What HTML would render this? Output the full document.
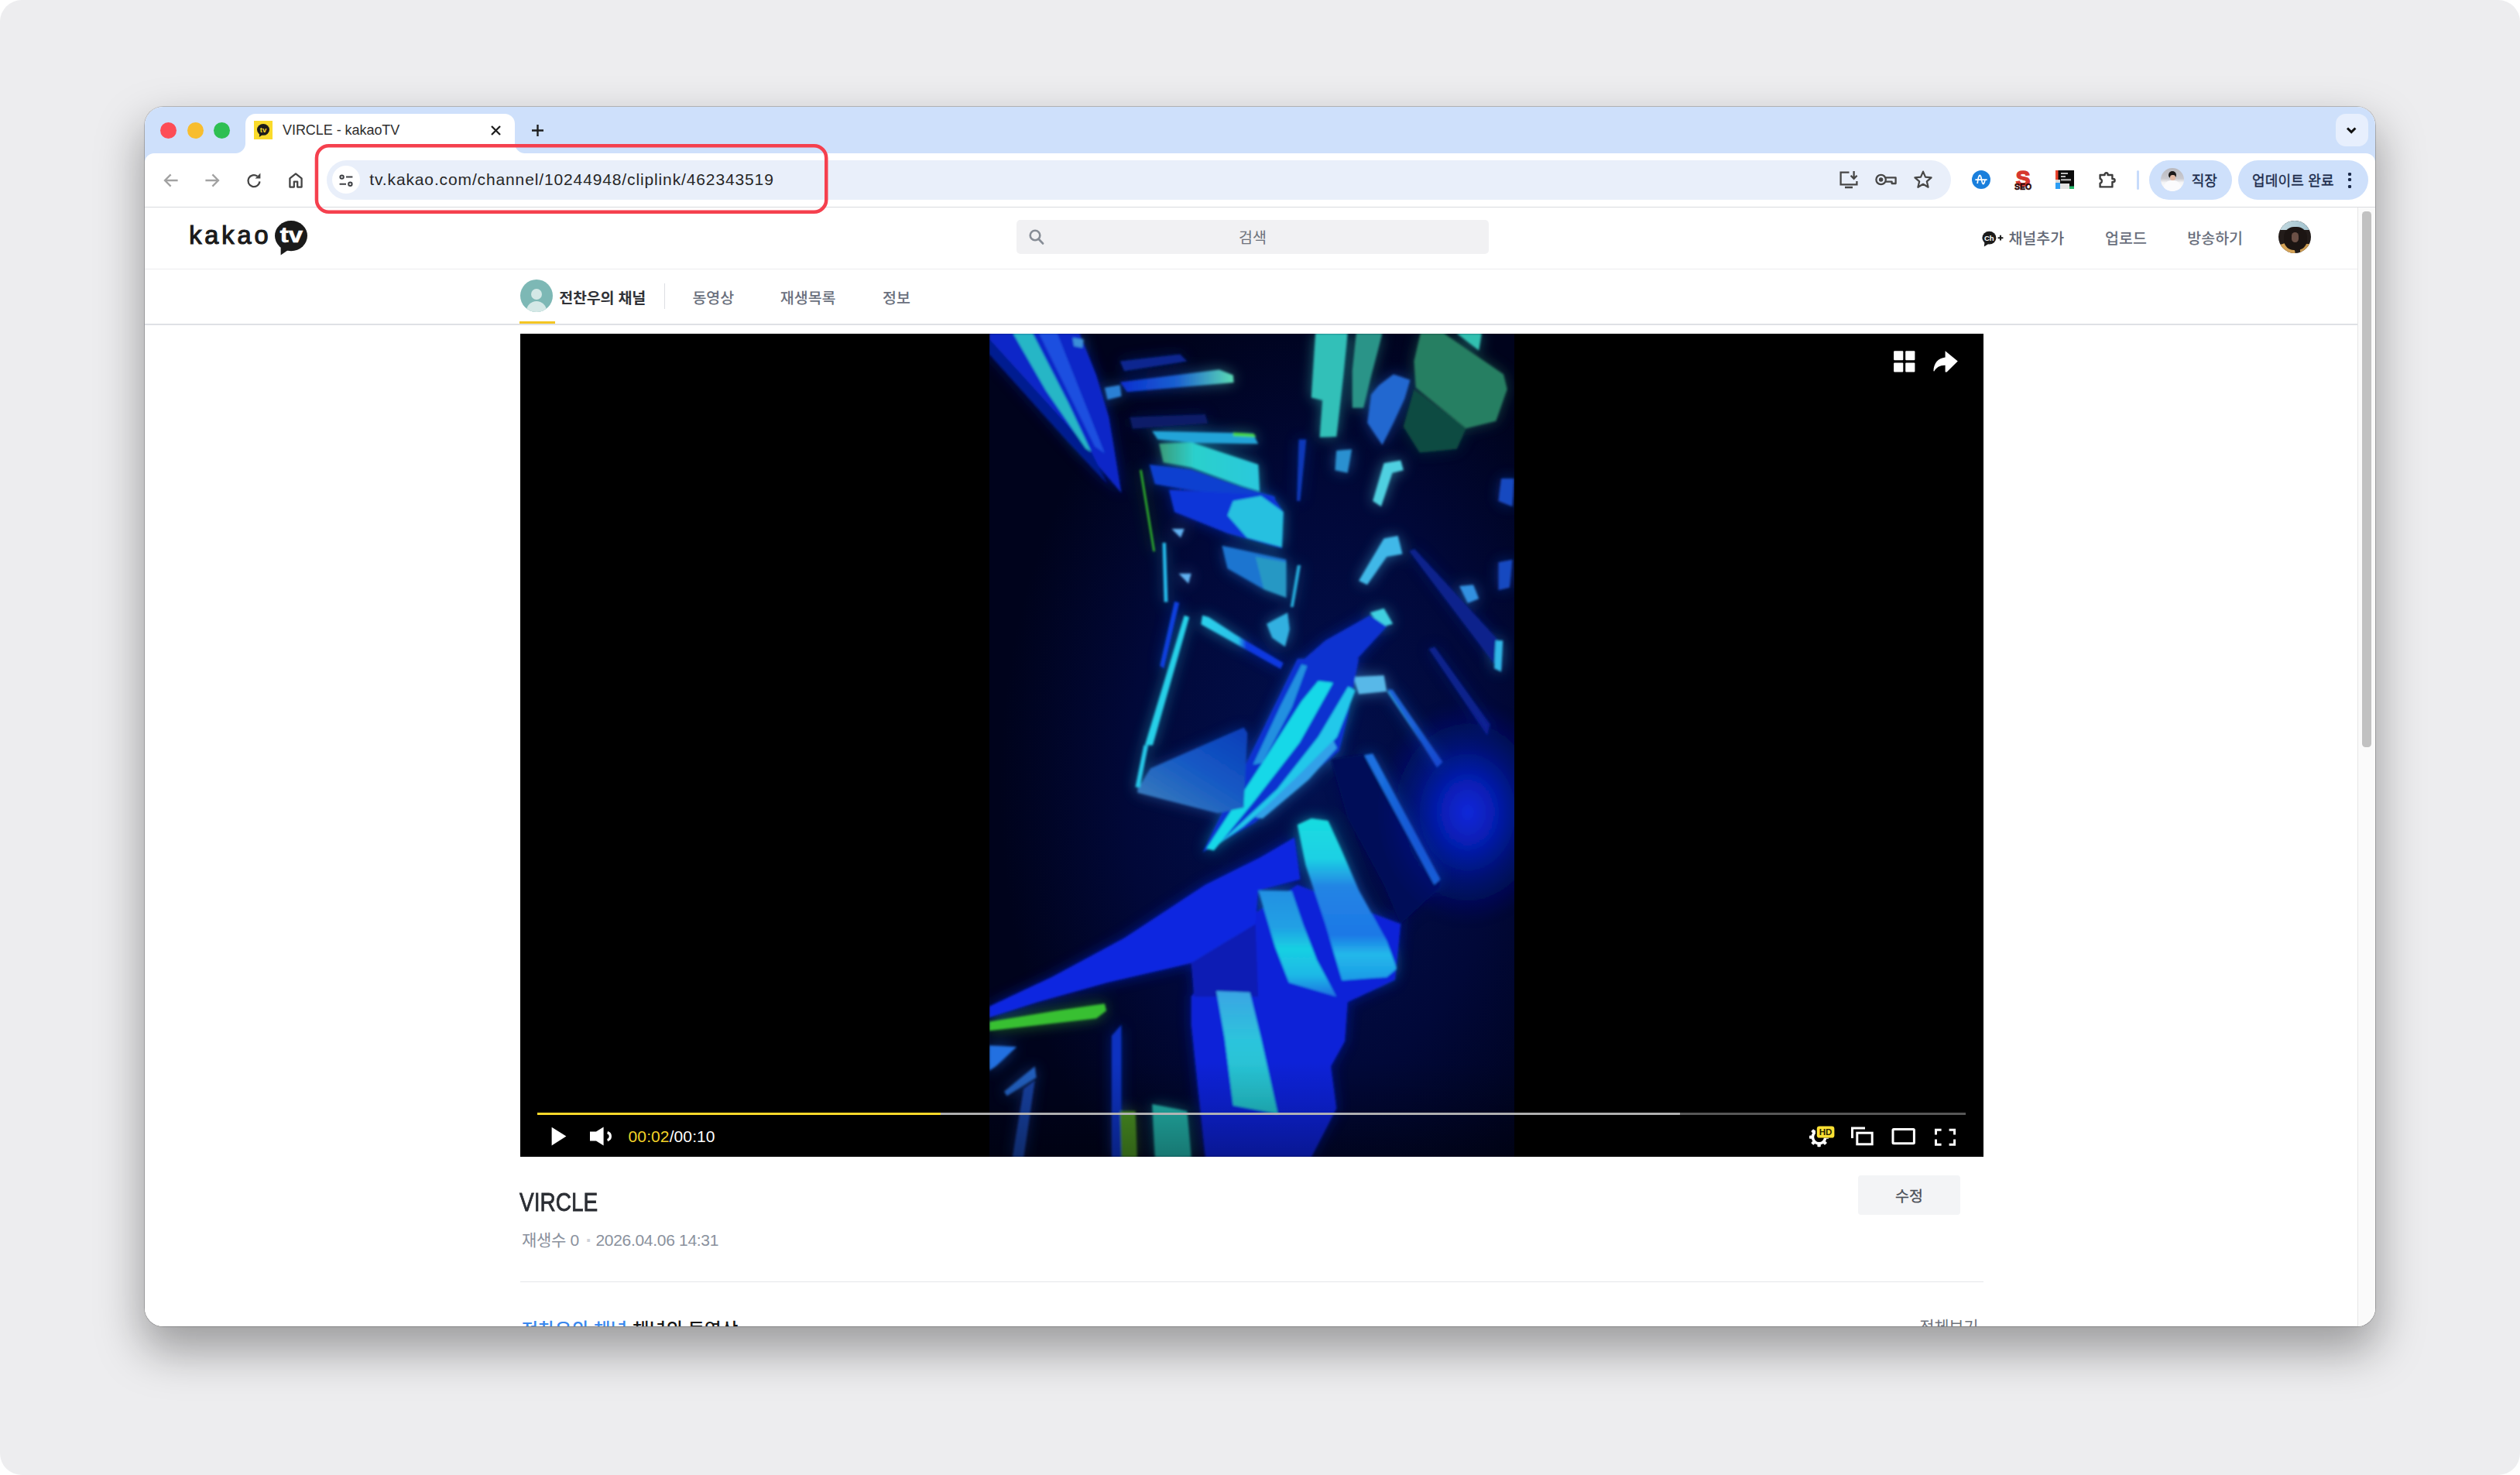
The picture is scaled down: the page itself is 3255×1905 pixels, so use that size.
<!DOCTYPE html>
<html lang="ko">
<head>
<meta charset="utf-8">
<meta name="viewport" content="width=3255, initial-scale=1">
<title>VIRCLE - kakaoTV</title>
<style>
*{box-sizing:border-box;margin:0;padding:0}
html,body{width:3255px;height:1905px;overflow:hidden;background:#fff}
body{font-family:"Liberation Sans","Noto Sans CJK KR",sans-serif;position:relative;color:#222}
.abs{position:absolute}
.t{position:absolute;white-space:nowrap;line-height:1}
#bg{left:0;top:0;width:3255px;height:1905px;border-radius:28px;background:#ededef}
#shadow{left:187px;top:138px;width:2881px;height:1575px;border-radius:24px;
 box-shadow:0 0 0 1px rgba(0,0,0,.2),0 28px 58px 4px rgba(0,0,0,.34)}
#win{left:187px;top:138px;width:2881px;height:1575px;border-radius:24px;overflow:hidden;background:#fff}
/* ---------- chrome ---------- */
#strip{left:0;top:0;width:2881px;height:70px;background:#cee0fb}
.tl{width:21px;height:21px;border-radius:50%;top:19.5px}
#tab{left:130px;top:9px;width:348px;height:52px;background:#fff;border-radius:13px 13px 0 0}
#tab:before,#tab:after{content:"";position:absolute;bottom:1px;width:13px;height:13px;background:radial-gradient(circle at 0 0,rgba(255,255,255,0) 12.5px,#fff 13.5px)}
#tab:before{left:-13px}
#tab:after{right:-13px;transform:scaleX(-1)}
#toolbar{left:0;top:60px;width:2881px;height:70px;background:#fff;border-radius:12px 12px 0 0;border-bottom:1.5px solid #d9dbdf}
#omni{left:234.5px;top:69px;width:2098.5px;height:51px;border-radius:26px;background:#e9effa}
.pill{top:69px;height:51px;border-radius:26px;background:#cee0fb}
/* ---------- page ---------- */
#page{left:0;top:130px;width:2858px;height:1445px;background:#fff;overflow:hidden}
#sb{left:2858px;top:130px;width:23px;height:1445px;background:#fafafa;border-left:1.5px solid #e6e6e6}
#sbthumb{left:5px;top:5px;width:12px;height:692px;border-radius:4.5px;background:#c1c1c1}
.hl{left:0;width:2858px}
.nav{font-size:18px;color:#6a7180;top:36px}
.gn{font-size:18px;color:#6a707d;font-weight:500}
#video{left:485px;top:163px;width:1890px;height:1063px;background:#000;overflow:hidden}
</style>
</head>
<body>
<div id="bg" class="abs"></div>
<div id="shadow" class="abs"></div>
<div id="win" class="abs">

<!-- ======= tab strip ======= -->
<div id="strip" class="abs"></div>
<div class="abs tl" style="left:20px;background:#fd4d56"></div>
<div class="abs tl" style="left:54.5px;background:#f8bd2e"></div>
<div class="abs tl" style="left:89px;background:#2ebf52"></div>
<div id="tab" class="abs"></div>
<!-- favicon -->
<div class="abs" style="left:141px;top:18px;width:24px;height:24px;background:#fadb2b"></div>
<svg class="abs" style="left:141px;top:18px" width="24" height="24" viewBox="0 0 24 24"><ellipse cx="12" cy="11.4" rx="8" ry="7.4" fill="#1b1b1b"/><path d="M7.2 16.5 L6.8 21 L11.5 17.8Z" fill="#1b1b1b"/><text x="12" y="14.6" font-family="'Liberation Sans',sans-serif" font-weight="700" font-size="9.5" fill="#fadb2b" text-anchor="middle">tv</text></svg>
<div class="t" style="left:178px;top:20.5px;font-size:18px;color:#2e2e2e;letter-spacing:-0.05px">VIRCLE - kakaoTV</div>
<svg class="abs" style="left:445px;top:21.5px" width="17" height="17" viewBox="0 0 17 17"><path d="M3 3 L14 14 M14 3 L3 14" stroke="#1f1f1f" stroke-width="2.3" fill="none"/></svg>
<svg class="abs" style="left:497px;top:20px" width="21" height="21" viewBox="0 0 21 21"><path d="M10.5 3 V18 M3 10.5 H18" stroke="#1f1f1f" stroke-width="2.4" fill="none"/></svg>
<div class="abs" style="left:2830px;top:9px;width:41.5px;height:42px;border-radius:13px;background:#e7effd"></div>
<svg class="abs" style="left:2840px;top:20px" width="21" height="21" viewBox="0 0 21 21"><path d="M5 7.5 L10.2 12.6 L15.4 7.5" stroke="#111" stroke-width="3" fill="none" stroke-linejoin="miter"/></svg>


<!-- ======= toolbar ======= -->
<div id="toolbar" class="abs"></div>
<div id="omni" class="abs"></div>
<!-- nav icons -->
<svg class="abs" style="left:21.5px;top:82.9px" width="24" height="24" viewBox="0 0 24 24"><path d="M20.6 12 H4.6 M11.6 4.4 L4 12 L11.6 19.6" stroke="#a2a2a2" stroke-width="2.3" fill="none"/></svg>
<svg class="abs" style="left:75.3px;top:82.9px" width="24" height="24" viewBox="0 0 24 24"><path d="M3.4 12 H19.4 M12.4 4.4 L20 12 L12.4 19.6" stroke="#a2a2a2" stroke-width="2.3" fill="none"/></svg>
<svg class="abs" style="left:129.3px;top:82.9px" width="24" height="24" viewBox="0 0 24 24"><path d="M19.4 13.4 A7.5 7.5 0 1 1 16.4 6.6" stroke="#454545" stroke-width="2.3" fill="none"/><path d="M13.6 9.4 H20.4 V2.6 Z" fill="#454545"/></svg>
<svg class="abs" style="left:183.4px;top:82.9px" width="24" height="24" viewBox="0 0 24 24"><path d="M4.4 20.6 V9.4 L12 3.4 L19.6 9.4 V20.6 H14.2 V13.6 H9.8 V20.6 Z" stroke="#454545" stroke-width="2.3" fill="none" stroke-linejoin="round"/></svg>
<!-- site info -->
<div class="abs" style="left:241.7px;top:76.4px;width:36px;height:36px;border-radius:50%;background:#fff"></div>
<svg class="abs" style="left:247.7px;top:82.9px" width="24" height="24" viewBox="0 0 24 24"><g stroke="#3f4145" stroke-width="2" fill="none"><circle cx="6.6" cy="7.6" r="2.2"/><path d="M12 7.6 H20.4"/><circle cx="17.4" cy="16.8" r="2.2"/><path d="M3.6 16.8 H12"/></g></svg>
<div class="t" id="url" style="left:290.3px;top:83.2px;font-size:21px;color:#262626;letter-spacing:0.87px">tv.kakao.com/channel/10244948/cliplink/462343519</div>
<!-- omnibox right icons -->
<svg class="abs" style="left:2186.6px;top:80.4px" width="28" height="28" viewBox="0 0 28 28"><g stroke="#474747" stroke-width="2.3" fill="none"><path d="M14.5 4.6 H3.6 V20.4 H24.4 V16"/><path d="M9 24 H19" stroke-width="2.6"/><path d="M20.6 3 V12.6 M16.6 8.8 L20.6 12.8 L24.6 8.8"/></g></svg>
<svg class="abs" style="left:2234px;top:80.4px" width="30" height="28" viewBox="0 0 30 28"><g stroke="#474747" stroke-width="2.3" fill="none"><circle cx="8.6" cy="14" r="6.2"/><circle cx="8.6" cy="14" r="1.6" fill="#474747"/><path d="M14.6 11.4 H27.6 V19 H22.6 V16.6 H14.6" stroke-linejoin="round"/></g></svg>
<svg class="abs" style="left:2283px;top:80.4px" width="28" height="28" viewBox="0 0 28 28"><path d="M14 3.6 L17 10.6 L24.6 11.3 L18.8 16.3 L20.6 23.8 L14 19.8 L7.4 23.8 L9.2 16.3 L3.4 11.3 L11 10.6 Z" stroke="#474747" stroke-width="2.2" fill="none" stroke-linejoin="round"/></svg>
<!-- extensions -->
<svg class="abs" style="left:2359.6px;top:82.4px" width="24" height="24" viewBox="0 0 24 24"><circle cx="12" cy="12" r="12" fill="#1a7fdc"/><path d="M4.4 12.2 H19.6 M7.2 17 C8.6 4.6 11 3.6 12.4 11.4 C13.6 18.4 15.2 20.4 17 12.4" stroke="#fff" stroke-width="1.7" fill="none"/></svg>
<svg class="abs" style="left:2410px;top:80px" width="32" height="30" viewBox="0 0 32 30"><text x="16" y="22" text-anchor="middle" font-family="'Liberation Sans',sans-serif" font-weight="700" font-size="28" fill="#d6382e" stroke="#d6382e" stroke-width="1.6">S</text><text x="16" y="27.4" text-anchor="middle" font-family="'Liberation Sans',sans-serif" font-weight="700" font-size="10.5" fill="#2a0808" stroke="#2a0808" stroke-width="0.5">SEO</text></svg>
<svg class="abs" style="left:2467.9px;top:82.4px" width="24" height="24" viewBox="0 0 24 24"><rect width="24" height="24" fill="#0b0b0b"/><rect x="0" y="0" width="3.5" height="12" fill="#e8432d"/><rect x="0" y="12" width="6" height="4" fill="#d8d8d8"/><rect x="0" y="16" width="6" height="8" fill="#2b9df4"/><rect x="6" y="17" width="12" height="7" fill="#e3e3e3"/><rect x="18" y="20.5" width="6" height="3.5" fill="#23b868"/><rect x="7" y="3" width="9" height="2" fill="#bdbdbd"/><rect x="7" y="7" width="6" height="2" fill="#bdbdbd"/><rect x="7" y="11" width="13" height="2.5" fill="#a8a8a8"/></svg>
<svg class="abs" style="left:2520px;top:80.4px" width="28" height="28" viewBox="0 0 28 28"><path d="M5.6 8 H11.6 V7.2 A2 2 0 0 1 15.6 7.2 V8 H21.4 V13 H22.6 A2 2 0 0 1 22.6 17 H21.4 V23.4 H5.6 V18.6 A3 3 0 0 0 5.6 12.8 Z" stroke="#3c3c3c" stroke-width="2.4" fill="none" stroke-linejoin="round"/></svg>
<div class="abs" style="left:2573px;top:82px;width:3px;height:25px;border-radius:1.5px;background:#c7dbfb"></div>
<!-- profile pill -->
<div class="abs pill" style="left:2589.4px;width:106.5px"></div>
<div class="abs" style="left:2604.4px;top:79.4px;width:30px;height:30px;border-radius:50%;background:linear-gradient(180deg,#b9b9bf 0%,#c9c9cf 45%,#f4f4f6 62%,#fff 100%);overflow:hidden">
  <div class="abs" style="left:10px;top:4px;width:10px;height:9px;border-radius:5px 5px 4px 4px;background:#1c1a1a"></div>
  <div class="abs" style="left:11.5px;top:8.5px;width:7px;height:7px;border-radius:3px;background:#e3b9a4"></div>
  <div class="abs" style="left:4px;top:15.5px;width:22px;height:18px;border-radius:9px 9px 0 0;background:#fbfbfd"></div>
</div>
<div class="t" style="left:2643.8px;top:86.6px;font-size:18px;color:#1b2a4a;-webkit-text-stroke:0.35px #1b2a4a">직장</div>
<!-- update pill -->
<div class="abs pill" style="left:2703.7px;width:168px"></div>
<div class="t" style="left:2722px;top:86.6px;font-size:18px;color:#1b2a4a;letter-spacing:0.2px;-webkit-text-stroke:0.35px #1b2a4a">업데이트 완료</div>
<div class="abs" style="left:2845.5px;top:84.5px;width:4px;height:4px;border-radius:1.2px;background:#1b2a4a"></div>
<div class="abs" style="left:2845.5px;top:92.4px;width:4px;height:4px;border-radius:1.2px;background:#1b2a4a"></div>
<div class="abs" style="left:2845.5px;top:100.5px;width:4px;height:4px;border-radius:1.2px;background:#1b2a4a"></div>


<!-- ======= page ======= -->
<div id="page" class="abs">
<!-- header -->
<div class="t" id="logo" style="left:57.2px;top:19.7px;font-size:32.5px;font-weight:400;color:#1a1a1a;letter-spacing:3.9px;-webkit-text-stroke:1.15px #1a1a1a">kakao</div>
<svg class="abs" style="left:166px;top:15px" width="48" height="50" viewBox="0 0 48 50"><ellipse cx="23" cy="21.6" rx="21" ry="19.6" fill="#1a1a1a"/><path d="M9.6 36 L9.6 46.6 L19 40Z" fill="#1a1a1a"/><text x="23.4" y="30.4" text-anchor="middle" transform="translate(23.4 0) scale(1.17 1) translate(-23.4 0)" font-family="'Liberation Sans',sans-serif" font-weight="700" font-size="28" fill="#fff" stroke="#fff" stroke-width="0.7" letter-spacing="0">tv</text></svg>
<div class="abs" style="left:1126px;top:15.6px;width:609.5px;height:44.5px;border-radius:5px;background:#f1f1f3"></div>
<svg class="abs" style="left:1140px;top:25.5px" width="24" height="24" viewBox="0 0 24 24"><circle cx="10" cy="10" r="6.3" stroke="#878d96" stroke-width="2.6" fill="none"/><path d="M14.6 14.8 L20 20.4" stroke="#878d96" stroke-width="2.8" stroke-linecap="round"/></svg>
<div class="t" style="left:1412px;top:29.6px;width:38px;text-align:center;font-size:19.5px;color:#6d727c">검색</div>
<svg class="abs" style="left:2370px;top:27.6px" width="36" height="26" viewBox="0 0 36 26"><ellipse cx="12.4" cy="11.2" rx="9" ry="8.4" fill="#1b1b1b"/><path d="M6.4 17 L5.8 22.4 L11 19.2Z" fill="#1b1b1b"/><text x="12.3" y="14.6" text-anchor="middle" font-family="'Liberation Sans',sans-serif" font-weight="700" font-size="9.6" fill="#fff">Ch</text><path d="M23.6 11.2 H30.4 M27 7.8 V14.6" stroke="#1b1b1b" stroke-width="1.9"/></svg>
<div class="t gn" style="left:2407.4px;top:30.6px;font-size:19.5px;color:#626875">채널추가</div>
<div class="t gn" style="left:2532px;top:30.6px;font-size:19.5px">업로드</div>
<div class="t gn" style="left:2638.3px;top:30.6px;font-size:19.5px">방송하기</div>
<div class="abs" style="left:2755.8px;top:17px;width:42px;height:42px;border-radius:50%;overflow:hidden;background:#231c1a">
  <div class="abs" style="left:0;top:0;width:42px;height:12px;background:linear-gradient(90deg,#c5dbe2,#9fc0cc)"></div>
  <div class="abs" style="left:-6px;top:30px;width:26px;height:16px;background:#d6a458;transform:rotate(-18deg)"></div>
  <div class="abs" style="left:28px;top:30px;width:16px;height:14px;background:#c99a52"></div>
  <div class="abs" style="left:7px;top:8px;width:30px;height:30px;border-radius:13px;background:#1c1513"></div>
  <div class="abs" style="left:17px;top:15px;width:9px;height:13px;border-radius:5px;background:#6b5046"></div>
</div>
<div class="abs hl" style="top:78.6px;height:1.5px;background:#ecedef"></div>
<!-- channel nav -->
<div class="abs" style="left:485px;top:93.3px;width:42px;height:42px;border-radius:50%;background:#7db8b5;overflow:hidden">
  <div class="abs" style="left:14px;top:12px;width:14px;height:14px;border-radius:50%;background:#d4e8e6"></div>
  <div class="abs" style="left:8px;top:27.6px;width:26px;height:20px;border-radius:13px 13px 0 0;background:#d4e8e6"></div>
</div>
<div class="t" style="left:535.3px;top:107.6px;font-size:19.5px;font-weight:700;color:#303237;letter-spacing:-0.2px">전찬우의 채널</div>
<div class="abs" style="left:670.8px;top:98px;width:1.5px;height:33px;background:#dddfe3"></div>
<div class="t gn" style="left:707.4px;top:107.8px;font-size:19.5px">동영상</div>
<div class="t gn" style="left:820.8px;top:107.8px;font-size:19.5px">재생목록</div>
<div class="t gn" style="left:953px;top:107.8px;font-size:19.5px">정보</div>
<div class="abs hl" style="top:150.4px;height:1.6px;background:#dfe1e5"></div>
<div class="abs" style="left:483.5px;top:147.2px;width:46.5px;height:3.2px;background:#f4c623"></div>
<!-- video -->
<div id="video" class="abs">
<svg class="abs" style="left:606px;top:0" width="678" height="1063" viewBox="0 0 678 1063">
<defs>
<filter id="bl" x="-5%" y="-5%" width="110%" height="110%"><feGaussianBlur stdDeviation="1.6"/></filter>
<filter id="bl2" x="-20%" y="-20%" width="140%" height="140%"><feGaussianBlur stdDeviation="9"/></filter>
<linearGradient id="g4" x1="0" x2="1"><stop offset="0" stop-color="#0a2fd0"/><stop offset=".5" stop-color="#1a60d0"/><stop offset="1" stop-color="#5cdcb4"/></linearGradient>
<linearGradient id="g7" x1="0" x2="1"><stop offset="0" stop-color="#3a9a78"/><stop offset=".35" stop-color="#2cd0cc"/><stop offset="1" stop-color="#2ac8dc"/></linearGradient>
<linearGradient id="g14" x1="0" x2="1"><stop offset="0" stop-color="#2cd0ea"/><stop offset=".45" stop-color="#28c0e8"/><stop offset=".55" stop-color="#1038e0"/><stop offset="1" stop-color="#1038e0"/></linearGradient>
<linearGradient id="gb6" x1="0" x2="0" y1="0" y2="1"><stop offset="0" stop-color="#18dce0"/><stop offset=".25" stop-color="#1cd0e4"/><stop offset=".42" stop-color="#2484e4"/><stop offset=".72" stop-color="#1c78e6"/><stop offset=".84" stop-color="#22b8ea"/><stop offset="1" stop-color="#1c9ae6"/></linearGradient>
<linearGradient id="gb7" x1="0" x2="0" y1="0" y2="1"><stop offset="0" stop-color="#2090e2"/><stop offset=".35" stop-color="#20a0e4"/><stop offset=".55" stop-color="#18d0e2"/><stop offset=".8" stop-color="#1cb8e6"/><stop offset="1" stop-color="#1a70e0"/></linearGradient>
<linearGradient id="gb8" x1="0" x2="0" y1="0" y2="1"><stop offset="0" stop-color="#3aa4e4"/><stop offset=".4" stop-color="#2cc4dc"/><stop offset="1" stop-color="#22c0c8"/></linearGradient>
<linearGradient id="gbg" x1="0" x2="1" y1="0" y2="1"><stop offset="0" stop-color="#00031c"/><stop offset=".5" stop-color="#010628"/><stop offset="1" stop-color="#010420"/></linearGradient>
<linearGradient id="gm2" x1="1" y1="0" x2="0.2" y2="1"><stop offset="0" stop-color="#0a3cb8"/><stop offset=".5" stop-color="#1458c4"/><stop offset="1" stop-color="#3a7cbc"/></linearGradient>
<radialGradient id="glow"><stop offset="0" stop-color="#0c2ae8" stop-opacity=".85"/><stop offset=".3" stop-color="#0a24d8" stop-opacity=".62"/><stop offset=".6" stop-color="#0a1fc0" stop-opacity=".3"/><stop offset="1" stop-color="#0818a0" stop-opacity="0"/></radialGradient>
<radialGradient id="haze" cx=".62" cy=".55" r=".6"><stop offset="0" stop-color="#02104e"/><stop offset=".6" stop-color="#010838"/><stop offset="1" stop-color="#00031c"/></radialGradient>
</defs>
<rect width="678" height="1063" fill="url(#haze)"/>
<defs><g id="shp">
<!-- ============ TOP HALF ============ -->
<g transform="translate(-100,-0.5) scale(0.3607)">
<polygon points="277,0 600,0 660,150 705,300 750,572 620,420 277,70" fill="#0a25c8"/>
<polygon points="277,20 277,75 560,390 700,540 640,420" fill="#061a90"/>
<polygon points="362,0 432,0 560,250 642,425 622,412 480,205" fill="#27b6c6"/>
<polygon points="455,0 520,0 690,430 655,405" fill="#1a50e0"/>
<polygon points="575,15 615,22 610,52 580,46" fill="#3a8fd8"/>
<polygon points="690,195 745,185 750,225 700,238" fill="#2a80d4"/>
<polygon points="745,100 960,75 985,100 760,135" fill="#0a2890"/>
<polygon points="745,175 1100,130 1150,150 1152,176 770,210" fill="url(#g4)"/>
<polygon points="780,300 1050,290 1060,322 790,342" fill="#081c68"/>
<polygon points="860,350 1220,358 1240,396 1010,392 880,380" fill="#22a4d8"/>
<polygon points="1150,355 1225,360 1232,372 1150,368" fill="#48d848"/>
<polygon points="885,395 1000,390 1240,470 1245,566 1180,546 1000,480 900,462" fill="url(#g7)"/>
<polygon points="850,470 1000,488 1180,550 1300,585 1300,602 1000,562 870,540" fill="#0a40d0"/>
<polygon points="920,560 1290,580 1330,640 1325,770 1130,716 940,640" fill="#0b35d8"/>
<polygon points="1150,600 1250,582 1330,640 1325,766 1200,732 1130,652" fill="#28c0e0"/>
<polygon points="1110,760 1340,810 1340,946 1260,916 1130,842" fill="#1a74d0"/>
<polygon points="1230,800 1340,820 1340,946 1260,916" fill="#2898c4"/>
<polygon points="816,490 822,488 870,780 864,782" fill="#38d828"/>
<polygon points="897,750 909,750 916,962 903,962" fill="#28c0f0"/>
<polygon points="940,960 957,965 902,1200 888,1190" fill="#1040e0"/>
<polygon points="975,1010 993,1016 862,1475 834,1475" fill="#28d0e8"/>
<polygon points="1040,1010 1062,1016 1160,1080 1330,1180 1320,1202 1150,1106 1035,1042" fill="url(#g14)"/>
<polygon points="1270,1040 1345,1000 1352,1060 1336,1122 1290,1090" fill="#30b0e0"/>
<polygon points="930,700 975,700 962,732" fill="#60b0f0"/>
<polygon points="955,860 1000,860 990,896" fill="#60b0f0"/>
<polygon points="1385,380 1412,380 1390,600 1378,600" fill="#0c38b8"/>
<polygon points="1380,830 1392,830 1366,980 1355,980" fill="#28b0e0"/>
<polygon points="1445,0 1560,0 1545,150 1520,370 1460,372 1470,240 1430,230" fill="#30c0b8"/>
<polygon points="1591,0 1684,0 1644,153 1617,267 1577,267 1577,133" fill="#2a9488"/>
<polygon points="1821,0 1904,0 2118,147 2131,200 2091,314 1984,340 1804,194 1798,100" fill="#277f62"/>
<polygon points="1950,0 2040,0 2030,62" fill="#30c0b0"/>
<polygon points="1798,200 1984,340 1951,414 1818,427 1760,334" fill="#114c42"/>
<polygon points="1671,187 1724,147 1784,167 1764,234 1724,320 1684,400 1631,320 1644,220" fill="#2468d0"/>
<polygon points="1520,420 1575,415 1560,500 1515,490" fill="#2a90d0"/>
<polygon points="1690,465 1750,455 1760,490 1720,500 1680,620 1650,600" fill="#50d0e0"/>
<polygon points="1690,735 1740,725 1756,790 1700,800 1630,900 1600,886" fill="#40b8e8"/>
<polygon points="1640,1000 1690,985 1722,1040 1680,1052" fill="#40d0e0"/>
<polygon points="1780,780 1800,772 2110,1110 2112,1200 2090,1190" fill="#08208c"/>
<polygon points="1850,1130 1872,1122 2070,1400 2060,1440" fill="#08208c"/>
<polygon points="1960,905 2010,900 2030,950 1990,966" fill="#3090e0"/>
<polygon points="2090,1100 2116,1100 2110,1212 2085,1200" fill="#30b8e8"/>
<polygon points="2110,520 2156,520 2150,620 2100,600" fill="#1848c0"/>
<polygon points="2100,820 2150,810 2140,910 2100,920" fill="#1848c0"/>
<polygon points="1580,1230 1690,1225 1700,1282 1600,1292" fill="#58b8e8"/>
<polygon points="1700,1282 1720,1275 1840,1450 1820,1460" fill="#2890d0"/>
<polygon points="1640,1010 1700,1050 1590,1170 1400,1170 1480,1100" fill="#0c30d0"/>

</g>
<!-- ============ BOTTOM HALF ============ -->
<g transform="translate(-100,531.5) scale(0.3607)">
<polygon points="1041,383 1380,-310 1600,-310 1560,-100 1530,20 1228,277" fill="#0a30d0"/>
<polygon points="1221,70 1321,-144 1395,-290 1415,-284 1361,-137 1255,63" fill="#2090e0"/>
<polygon points="1054,370 1255,63 1395,-157 1455,-230 1508,-224 1388,-10 1228,197 1081,377" fill="#18d8e8"/>
<polygon points="1094,357 1308,157 1455,-30 1562,-210 1588,-197 1522,-30 1388,117 1188,290" fill="#20c8ea"/>
<polygon points="1228,257 1388,103 1508,-17 1522,10 1421,123 1255,263" fill="#30a0e8"/>
<polygon points="808,157 854,83 1188,-64 1201,-44 1188,223 1095,243 808,170" fill="url(#gm2)"/>
<polygon points="1702,-204 1722,-197 1900,60 1880,80" fill="#1a60d8"/>
<polygon points="800,150 830,0 846,0 816,152" fill="#28c8e8"/>
<polygon points="1000,900 1200,620 1380,500 1750,640 1730,840 1560,920 1550,1060 1500,1150 1520,1300 1430,1475 1050,1475 1000,1000" fill="#0a22d8"/>
<polygon points="1000,780 1230,640 1240,900 1010,900" fill="#0a1fb4"/>
<polygon points="277,935 500,830 760,690 1050,500 1250,400 1370,330 1390,480 1240,520 1230,640 1000,780 700,850 450,920 277,975" fill="#0a25e0"/>
<polygon points="1500,50 1640,30 1890,470 1890,510 1750,640 1690,500 1560,260" fill="#040e58"/>
<polygon points="1620,36 1650,30 1892,480 1870,500" fill="#1a70e0"/>
<polygon points="1380,285 1430,262 1490,270 1540,380 1600,520 1700,700 1736,800 1700,830 1540,842 1480,640 1410,430" fill="url(#gb6)"/>
<polygon points="1240,520 1360,522 1400,640 1450,770 1520,900 1350,850 1300,720" fill="url(#gb7)"/>
<polygon points="1090,880 1210,885 1250,1050 1310,1320 1150,1290 1120,1050" fill="url(#gb8)"/>
<polygon points="277,990 520,950 690,925 696,950 660,978 277,1022" fill="#38c030"/>
<polygon points="277,1075 375,1080 300,1150 277,1165" fill="#2070e0"/>
<polygon points="330,1240 440,1150 445,1190 340,1256" fill="#2060c0"/>
<polygon points="400,1230 440,1200 400,1475 360,1475" fill="#1840a0"/>
<polygon points="715,1040 750,1000 750,1475 715,1475" fill="#0a30c0"/>
<polygon points="745,1310 800,1310 806,1475 750,1475" fill="#4a9020"/>
<polygon points="860,1285 985,1310 1000,1475 870,1475" fill="#20b0a8"/>
<ellipse cx="1990" cy="240" rx="330" ry="400" fill="url(#glow)"/>

</g>
</g></defs>
<use href="#shp" filter="url(#bl2)" opacity=".55"/>
<use href="#shp" filter="url(#bl)"/>
</svg>

<div class="abs" style="left:0;top:940px;width:1890px;height:123px;background:linear-gradient(180deg,rgba(0,0,0,0) 0%,rgba(0,0,0,.12) 45%,rgba(0,0,0,.32) 100%)"></div>
<!-- top right icons -->
<svg class="abs" style="left:1773px;top:21px" width="30" height="30" viewBox="0 0 30 30"><g fill="#fff"><rect x="1.1" y="1.3" width="12.2" height="12" rx="1"/><rect x="16.2" y="1.3" width="12.2" height="12" rx="1"/><rect x="1.1" y="16.4" width="12.2" height="12" rx="1"/><rect x="16.2" y="16.4" width="12.2" height="12" rx="1"/></g></svg>
<svg class="abs" style="left:1824px;top:21px" width="34" height="30" viewBox="0 0 34 30"><path d="M16.6 1.2 L32.8 14.4 L18.6 28.4 L16.6 28.4 L16.6 19.8 C10 19.6 5 22.4 2.4 27.6 L1.4 27.2 C1.8 17 7.6 10.6 16.6 9.6 Z" fill="#fff"/></svg>
<!-- progress -->
<div class="abs" style="left:22.4px;top:1006px;width:1845px;height:3px;background:rgba(120,120,120,.72)"></div>
<div class="abs" style="left:22.4px;top:1006px;width:1476px;height:3px;background:rgba(190,190,190,.85)"></div>
<div class="abs" style="left:22.4px;top:1006px;width:520.8px;height:3px;background:#fbd829"></div>
<!-- play -->
<svg class="abs" style="left:38px;top:1023px" width="24" height="28" viewBox="0 0 24 28"><path d="M2.6 1.8 L21.4 13.6 L2.6 25.6 Z" fill="#fff"/></svg>
<svg class="abs" style="left:88px;top:1023px" width="36" height="28" viewBox="0 0 36 28"><path d="M2 7.6 H10 L19.6 1.6 V25.6 L10 19.6 H2 Z" fill="#fff"/><path d="M24.6 8.6 A5.2 5.2 0 0 1 24.6 18.6" stroke="#fff" stroke-width="3.2" fill="none"/></svg>
<div class="t" style="left:139.6px;top:1026.4px;font-size:21px;color:#fff;letter-spacing:0.1px"><span style="color:#f4d328">00:02</span>/00:10</div>
<!-- gear + HD -->
<svg class="abs" style="left:1663.2px;top:1018px" width="42" height="40" viewBox="0 0 42 40"><g transform="translate(14.6,19.6)"><circle r="8.2" fill="none" stroke="#fff" stroke-width="3.6"/><g fill="#fff"><rect x="-2.2" y="-12.6" width="4.4" height="5" rx="1"/><rect x="-2.2" y="7.6" width="4.4" height="5" rx="1"/><rect x="-12.6" y="-2.2" width="5" height="4.4" rx="1"/><rect x="7.6" y="-2.2" width="5" height="4.4" rx="1"/><rect x="-2.2" y="-12.6" width="4.4" height="5" rx="1" transform="rotate(45)"/><rect x="-2.2" y="-12.6" width="4.4" height="5" rx="1" transform="rotate(135)"/><rect x="-2.2" y="-12.6" width="4.4" height="5" rx="1" transform="rotate(225)"/><rect x="-2.2" y="-12.6" width="4.4" height="5" rx="1" transform="rotate(315)"/></g><circle r="4.6" fill="#000"/></g><rect x="10" y="4" width="26" height="16.6" fill="#000"/><rect x="11.8" y="5.4" width="22.6" height="15.2" rx="3.4" fill="#fbe033"/><text x="23.1" y="17.2" text-anchor="middle" font-family="'Liberation Sans',sans-serif" font-weight="700" font-size="11.6" fill="#2a2300">HD</text></svg>
<svg class="abs" style="left:1718px;top:1023px" width="32" height="28" viewBox="0 0 32 28"><path d="M2.5 16 V3 H19" stroke="#fff" stroke-width="3" fill="none"/><rect x="8.8" y="9.2" width="19.4" height="14.6" stroke="#fff" stroke-width="3" fill="none"/></svg>
<svg class="abs" style="left:1770px;top:1023px" width="34" height="28" viewBox="0 0 34 28"><rect x="3" y="4.6" width="27.4" height="18.2" rx="1" stroke="#fff" stroke-width="3" fill="none"/></svg>
<svg class="abs" style="left:1825px;top:1023px" width="32" height="28" viewBox="0 0 32 28"><path d="M3.5 11.6 V5.2 H10.6 M20.6 5.2 H27.6 V11.6 M27.6 17.4 V24.2 H20.6 M10.6 24.2 H3.5 V17.4" stroke="#fff" stroke-width="3" fill="none"/></svg>

</div>
<!-- info -->
<div class="t" style="left:484.2px;top:1267.5px;font-size:33.6px;color:#2a2d33;transform-origin:0 50%;transform:scaleX(0.834);-webkit-text-stroke:0.8px #2a2d33">VIRCLE</div>
<div class="t" style="left:487px;top:1323.2px;font-size:21px;color:#8a919d;letter-spacing:-0.3px">재생수 0 <span style="color:#cfd3d9;font-size:26px;line-height:0;position:relative;top:2px;margin:0 -1px 0 3px;font-weight:700">·</span> 2026.04.06 14:31</div>
<div class="abs" style="left:2213px;top:1250px;width:132px;height:50.6px;border-radius:4px;background:#f3f4f6"></div>
<div class="t" style="left:2213px;top:1267.6px;width:132px;text-align:center;font-size:19.5px;color:#4a4f57;-webkit-text-stroke:0.3px #4a4f57">수정</div>
<div class="abs" style="left:485px;top:1386.6px;width:1890px;height:1.6px;background:#e5e7ea"></div>
<div class="t" style="left:486.4px;top:1439.2px;font-size:23.6px;font-weight:500;color:#161616"><span style="color:#3a88ee">전찬우의 채널</span> 채널의 동영상</div>
<div class="t" style="left:2292.2px;top:1434.6px;font-size:21px;color:#6f747c;letter-spacing:-0.3px">전체보기</div>

</div>
<div id="sb" class="abs"><div id="sbthumb" class="abs"></div></div>

<svg class="abs" style="left:215px;top:44px" width="680" height="100" viewBox="215 44 680 100"><rect x="221.95" y="50.25" width="658.3" height="85.4" rx="15.75" ry="15.75" fill="none" stroke="#f5404e" stroke-width="4.5"/></svg>

</div>
</body>
</html>
